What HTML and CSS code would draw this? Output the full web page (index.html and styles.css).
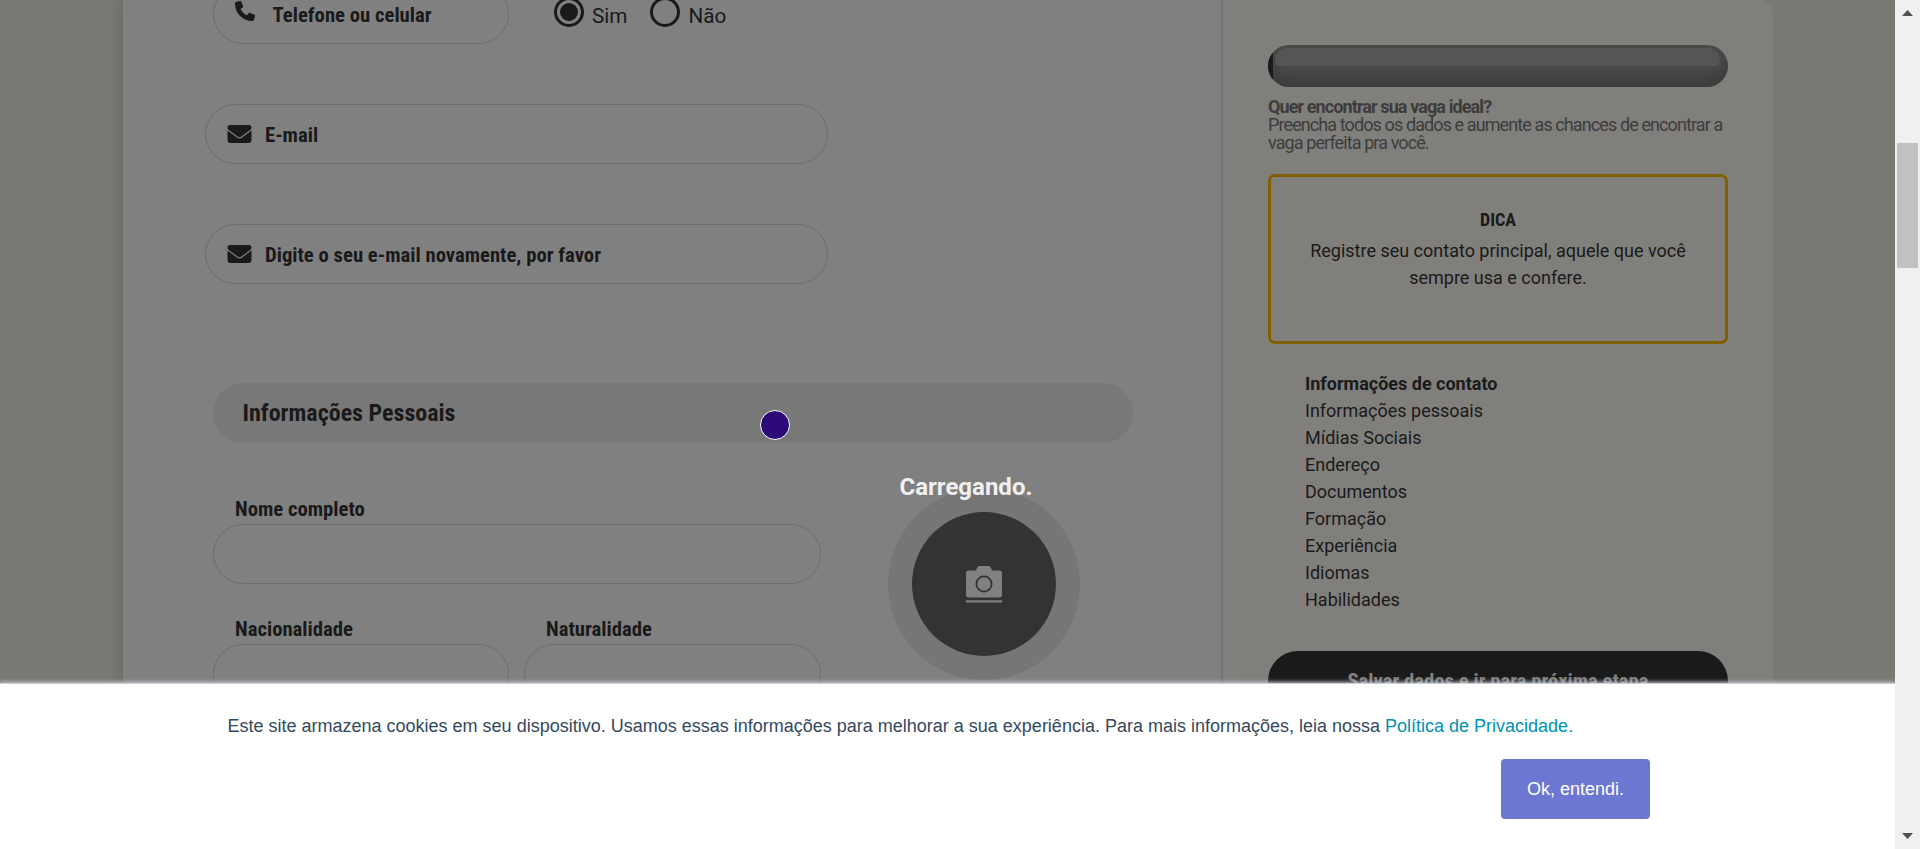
FILE: index.html
```html
<!DOCTYPE html>
<html lang="pt-BR">
<head>
<meta charset="utf-8">
<title>Cadastro</title>
<link rel="stylesheet" href="styles.css">
</head>
<body>
<div class="page">
  <main class="card">
    <div class="row contact">
      <div class="field phone">
        <svg class="icon-phone" viewBox="0 0 512 512"><path d="M165 25C157 6 136-5 116 1L28 25C11 30-1 46-1 64c0 247 201 448 448 448 18 0 34-12 39-29l24-88c6-20-5-41-24-49l-96-40c-16-7-35-2-46 11l-40 50c-71-33-128-90-161-161l49-40c13-11 18-30 11-46z"/></svg>
        <span class="label">Telefone ou celular</span>
      </div>
      <div class="radio on"></div><span class="choice">Sim</span>
      <div class="radio second"></div><span class="choice">Não</span>
    </div>
    <div class="field mail">
      <svg class="icon-mail" viewBox="0 0 24 18"><path d="M2.5 0h19A2.5 2.5 0 0 1 24 2.5c0 .9-.4 1.700-1 2.200L13.500 11.800a2.500 2.500 0 0 1-3 0L1 4.700A2.700 2.700 0 0 1 0 2.500 2.500 2.500 0 0 1 2.500 0z"/><path d="M0 5.500l9.700 7.200a3.800 3.800 0 0 0 4.600 0L24 5.500V15a3 3 0 0 1-3 3H3a3 3 0 0 1-3-3z"/></svg>
      <span class="label">E-mail</span>
    </div>
    <div class="field mail">
      <svg class="icon-mail" viewBox="0 0 24 18"><path d="M2.5 0h19A2.5 2.5 0 0 1 24 2.5c0 .9-.4 1.700-1 2.200L13.500 11.800a2.500 2.500 0 0 1-3 0L1 4.700A2.700 2.700 0 0 1 0 2.500 2.500 2.500 0 0 1 2.500 0z"/><path d="M0 5.500l9.700 7.200a3.800 3.800 0 0 0 4.600 0L24 5.500V15a3 3 0 0 1-3 3H3a3 3 0 0 1-3-3z"/></svg>
      <span class="label">Digite o seu e-mail novamente, por favor</span>
    </div>
    <h2 class="section"><span>Informações Pessoais</span></h2>
    <div class="personal">
      <div class="fields">
        <div class="group wide"><span class="label">Nome completo</span><div class="field"></div></div>
        <div class="group"><span class="label">Nacionalidade</span><div class="field"></div></div>
        <div class="group"><span class="label">Naturalidade</span><div class="field"></div></div>
      </div>
      <div class="photo"><div class="photo-in">
        <svg class="icon-cam" viewBox="0 0 36 37"><path d="M3 4.500h7l1.200-3Q11.800 0 13.300 0h9.400q1.500 0 2.100 1.500l1.200 3h7a3 3 0 0 1 3 3V28.500a3 3 0 0 1-3 3H3a3 3 0 0 1-3-3V7.500a3 3 0 0 1 3-3z"/><rect y="34.300" width="36" height="2.200"/><circle cx="18" cy="18" r="7.600"/></svg>
      </div></div>
    </div>
  </main>
  <aside class="side">
    <div class="progress"><div class="done"></div><div class="gloss"></div></div>
    <p class="pitch"><b>Quer encontrar sua vaga ideal?</b><br>Preencha todos os dados e aumente as chances de encontrar a vaga perfeita pra você.</p>
    <div class="tip"><b class="tip-title">DICA</b><p>Registre seu contato principal, aquele que você sempre usa e confere.</p></div>
    <ul class="steps">
      <li class="now">Informações de contato</li><li>Informações pessoais</li><li>Mídias Sociais</li><li>Endereço</li><li>Documentos</li><li>Formação</li><li>Experiência</li><li>Idiomas</li><li>Habilidades</li>
    </ul>
    <div class="save"><span>Salvar dados e ir para próxima etapa</span></div>
  </aside>
  <div class="dot"></div>
  <div class="loading"><span>Carregando.</span></div>
  <div class="cookies">
    <p class="notice">Este site armazena cookies em seu dispositivo. Usamos essas informações para melhorar a sua experiência. Para mais informações, leia nossa <a>Política de Privacidade.</a></p>
    <div class="ok"><span>Ok, entendi.</span></div>
  </div>
</div>
<div class="scroll">
  <svg viewBox="0 0 11 6" class="arrow"><path d="M5.500 0L11 6H0z"/></svg>
  <div class="thumb"></div>
  <svg viewBox="0 0 11 6" class="arrow down"><path d="M0 0h11L5.500 6z"/></svg>
</div>
</body>
</html>
```
FILE: styles.css
```css
* { box-sizing: border-box; }
body { margin: 0; width: 1920px; height: 849px; overflow: hidden; display: flex; font-family: Roboto, sans-serif; color: #1a1a1a; }
p, h2, ul { margin: 0; padding: 0; list-style: none; }
svg { display: block; flex: none; fill: #1a1a1a; }
.page { position: relative; width: 1895px; height: 849px; overflow: hidden; display: flex; padding-left: 123px; background: #7a7873; }
.card { width: 1100px; flex: none; height: 849px; background: #808080; border-right: 2px solid #727272; box-shadow: 0 0 15px rgba(0,0,0,.16); clip-path: inset(0 0 0 -30px); z-index: 1; padding-left: 82px; }
.label { font-family: "Roboto Condensed", Roboto, sans-serif; font-stretch: 75%; font-weight: 700; font-size: 20.7px; line-height: 24px; white-space: nowrap; }
.field { height: 60px; border: 1px solid #6d6d6d; border-radius: 30px; display: flex; align-items: center; }
.row { display: flex; }
.contact { margin: -16px 0 0 8px; height: 60px; }
.phone { width: 296px; padding-left: 21px; margin-right: 45px; }
.icon-phone { width: 20px; height: 20px; margin: -6px 17.500px 0 0; }
.phone .label { margin-top: 2px; }
.radio { width: 30px; height: 30px; border: 3px solid #1a1a1a; border-radius: 50%; margin-top: 13px; padding: 3px; }
.radio.on::after { content: ""; display: block; width: 18px; height: 18px; border-radius: 50%; background: #1a1a1a; }
.second { margin-left: 23px; }
.choice { font-size: 20.7px; font-weight: 400; line-height: 26px; margin: 19px 0 0 8px; }
.mail { width: 623px; margin-top: 60px; padding-left: 21px; }
.mail .label { margin-top: 1px; }
.icon-mail { width: 25px; height: 18px; margin-right: 13px; }
.section { width: 920px; height: 60px; margin: 99px 0 0 8px; border-radius: 30px; background: #787878; padding: 15px 29.500px; font: 700 24px/30px "Roboto Condensed", Roboto, sans-serif; font-stretch: 75%; }
.personal { display: flex; margin-left: 8px; }
.fields { width: 608px; margin-top: 54px; display: grid; grid-template-columns: 296px 297px; column-gap: 15px; row-gap: 33px; align-content: start; }
.wide { grid-column: 1 / 3; }
.group .label { display: block; padding-left: 22px; height: 27px; line-height: 25px; }
.photo { width: 192px; height: 192px; margin: 45px 0 0 67px; border-radius: 50%; background: #767679; padding: 24px; }
.photo-in { width: 144px; height: 144px; border-radius: 50%; background: #333; display: grid; place-items: center; }
.icon-cam { width: 36px; height: 37px; fill: #808080; }
.icon-cam circle { stroke: #333; stroke-width: 1.800; }
.side { width: 550px; height: 849px; padding: 45px 45px 0; background: linear-gradient(90deg, #808080 0 14px, #807f7c 14px); border-top-right-radius: 15px; }
.progress { position: relative; height: 42px; border-radius: 21px; overflow: hidden; background: linear-gradient(#4c4c4c, #484848); box-shadow: inset 0 -8px 16px rgba(0,0,0,.2); }
.done { width: 5px; height: 42px; background: #1a1a1a; }
.gloss { position: absolute; left: 7px; right: 8px; top: 3px; height: 18px; border-radius: 16px 16px 6px 6px; background: #555; }
.pitch { margin-top: 11px; font-size: 18px; line-height: 18px; letter-spacing: -.9px; color: #3c3c3c; }
.tip { margin-top: 22px; height: 170px; border: 3px solid #805f00; border-radius: 7px; text-align: center; padding: 29px 30px 0; font-size: 18px; line-height: 27px; }
.tip-title { display: block; font-family: "Roboto Condensed", Roboto, sans-serif; font-stretch: 75%; height: 31px; }
.steps { margin: 26px 0 0 37px; font-size: 18px; line-height: 27px; }
.now { font-weight: 700; }
.save { margin-top: 38px; height: 60px; border-radius: 30px; background: #1a1a1a; color: #808080; display: flex; align-items: center; justify-content: center; font: 700 20.7px "Roboto Condensed", Roboto, sans-serif; font-stretch: 75%; }
.dot { position: absolute; z-index: 3; left: 760px; top: 410px; width: 30px; height: 30px; border: 1px solid #fff; border-radius: 50%; background: #2e0a78; }
.loading { position: absolute; z-index: 3; left: 899.500px; top: 472px; font-size: 24px; font-weight: 700; line-height: 30px; color: #f0f0f0; }
.cookies { position: absolute; z-index: 4; left: 0; right: 0; bottom: 0; height: 165px; background: #fff; box-shadow: 0 -1px 0 #ccd1d9, 0 -2px 4px #c8ccd5; padding: 29px 245px 0 227.500px; font: 18px/27px "Liberation Sans", sans-serif; color: #34495e; }
.notice { white-space: nowrap; }
.notice a { color: #0092b3; }
.ok { width: 149px; height: 60px; margin: 19px 0 0 auto; border-radius: 4px; background: #6b77d1; color: #fff; display: grid; place-items: center; }
.scroll { width: 25px; height: 849px; background: #f0f0f0; display: flex; flex-direction: column; align-items: center; padding: 10px 0; }
.arrow { width: 11px; height: 6px; fill: #505050; }
.thumb { width: 21px; height: 125px; margin-top: 127px; background: #c1c1c1; }
.down { margin-top: auto; }
```
